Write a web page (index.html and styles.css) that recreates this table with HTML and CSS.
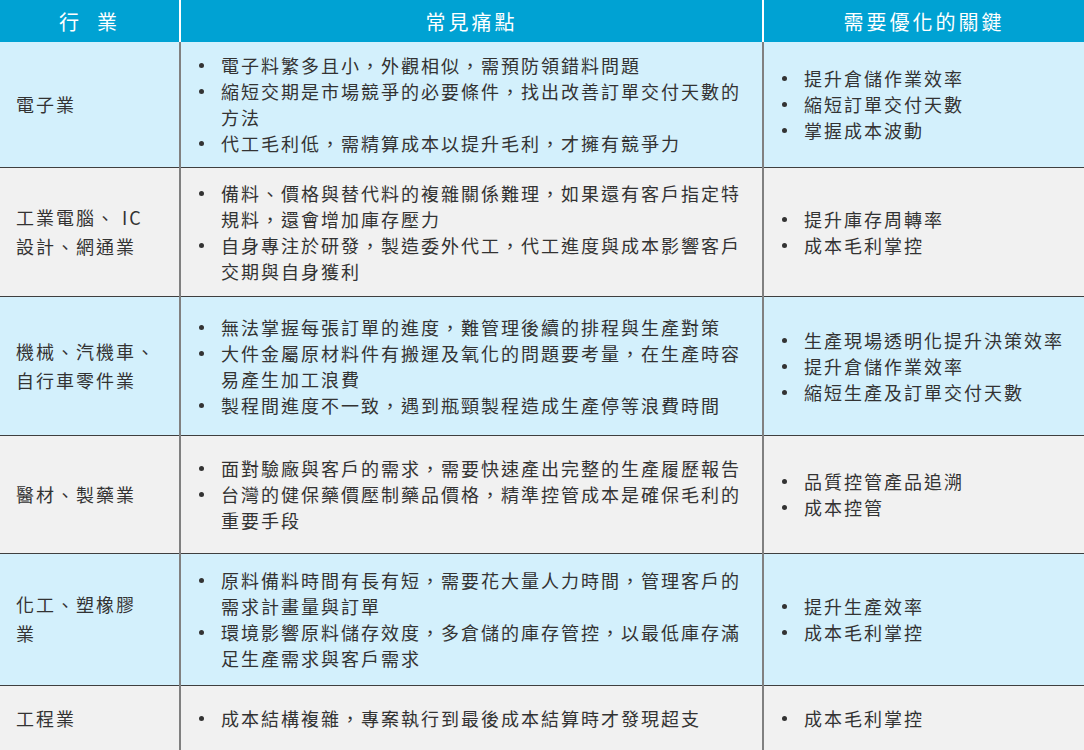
FILE: index.html
```html
<!DOCTYPE html>
<html lang="zh-Hant">
<head>
<meta charset="utf-8">
<link rel="stylesheet" href="styles.css">
</head>
<body>
<table class="grid">
  <colgroup><col class="c1"><col class="c2"><col class="c3"></colgroup>
  <thead>
    <tr class="head">
      <th>行&nbsp;&nbsp;業</th>
      <th>常見痛點</th>
      <th>需要優化的關鍵</th>
    </tr>
  </thead>
  <tbody>
    <tr class="blue r1">
      <td class="ind">電子業</td>
      <td><ul class="list">
        <li>電子料繁多且小，外觀相似，需預防領錯料問題</li>
        <li>縮短交期是市場競爭的必要條件，找出改善訂單交付天數的方法</li>
        <li>代工毛利低，需精算成本以提升毛利，才擁有競爭力</li>
      </ul></td>
      <td><ul class="list">
        <li>提升倉儲作業效率</li>
        <li>縮短訂單交付天數</li>
        <li>掌握成本波動</li>
      </ul></td>
    </tr>
    <tr class="gray r2">
      <td class="ind">工業電腦、 IC<br>設計、網通業</td>
      <td><ul class="list">
        <li>備料、價格與替代料的複雜關係難理，如果還有客戶指定特規料，還會增加庫存壓力</li>
        <li>自身專注於研發，製造委外代工，代工進度與成本影響客戶交期與自身獲利</li>
      </ul></td>
      <td><ul class="list">
        <li>提升庫存周轉率</li>
        <li>成本毛利掌控</li>
      </ul></td>
    </tr>
    <tr class="blue r3">
      <td class="ind">機械、汽機車、<br>自行車零件業</td>
      <td><ul class="list">
        <li>無法掌握每張訂單的進度，難管理後續的排程與生產對策</li>
        <li>大件金屬原材料件有搬運及氧化的問題要考量，在生產時容易產生加工浪費</li>
        <li>製程間進度不一致，遇到瓶頸製程造成生產停等浪費時間</li>
      </ul></td>
      <td><ul class="list">
        <li>生產現場透明化提升決策效率</li>
        <li>提升倉儲作業效率</li>
        <li>縮短生產及訂單交付天數</li>
      </ul></td>
    </tr>
    <tr class="gray r4">
      <td class="ind">醫材、製藥業</td>
      <td><ul class="list">
        <li>面對驗廠與客戶的需求，需要快速產出完整的生產履歷報告</li>
        <li>台灣的健保藥價壓制藥品價格，精準控管成本是確保毛利的重要手段</li>
      </ul></td>
      <td><ul class="list">
        <li>品質控管產品追溯</li>
        <li>成本控管</li>
      </ul></td>
    </tr>
    <tr class="blue r5">
      <td class="ind">化工、塑橡膠<br>業</td>
      <td><ul class="list">
        <li>原料備料時間有長有短，需要花大量人力時間，管理客戶的需求計畫量與訂單</li>
        <li>環境影響原料儲存效度，多倉儲的庫存管控，以最低庫存滿足生產需求與客戶需求</li>
      </ul></td>
      <td><ul class="list">
        <li>提升生產效率</li>
        <li>成本毛利掌控</li>
      </ul></td>
    </tr>
    <tr class="gray r6">
      <td class="ind">工程業</td>
      <td><ul class="list">
        <li>成本結構複雜，專案執行到最後成本結算時才發現超支</li>
      </ul></td>
      <td><ul class="list">
        <li>成本毛利掌控</li>
      </ul></td>
    </tr>
  </tbody>
</table>
</body>
</html>
```
FILE: styles.css
```css
html, body {
  margin: 0;
  padding: 0;
  background: #f1f1f1;
}
body {
  font-family: "Noto Sans CJK TC", "Noto Sans", sans-serif;
  color: #333;
}
.grid {
  width: 1084px;
  table-layout: fixed;
  border-collapse: collapse;
}
.c1 { width: 180px; }
.c2 { width: 583px; }
.c3 { width: 321px; }

.head { height: 42px; background: #00a2d3; }
.head th {
  color: #fff;
  font-weight: 400;
  font-size: 20px;
  letter-spacing: 3px;
  text-align: center;
  padding: 0;
  border-left: 2px solid #fff;
}
.head th:first-child { border-left: 0; }

tbody td {
  padding: 0;
  vertical-align: middle;
  border-top: 1px solid #3f3f3f;
  border-left: 2px solid #808080;
  font-size: 18px;
  letter-spacing: 2px;
  line-height: 26px;
}
tbody tr:first-child td { border-top: 0; }
tbody td:first-child { border-left: 0; }

.blue { background: #d3f0fc; }
.gray { background: #f1f1f1; }

.r1 { height: 125px; }
.r2 { height: 129px; }
.r3 { height: 139px; }
.r4 { height: 118px; }
.r5 { height: 132px; }
.r6 { height: 66px; }

.ind {
  padding-left: 16px;
  line-height: 29px;
}

.list {
  list-style: none;
  margin: 0;
  padding: 0 8px 0 18px;
}
.list li {
  display: flex;
}
.list li::before {
  content: "";
  flex: none;
  width: 5px;
  height: 5px;
  border-radius: 50%;
  background: #333;
  margin: 11px 17px 0 0;
}
```
